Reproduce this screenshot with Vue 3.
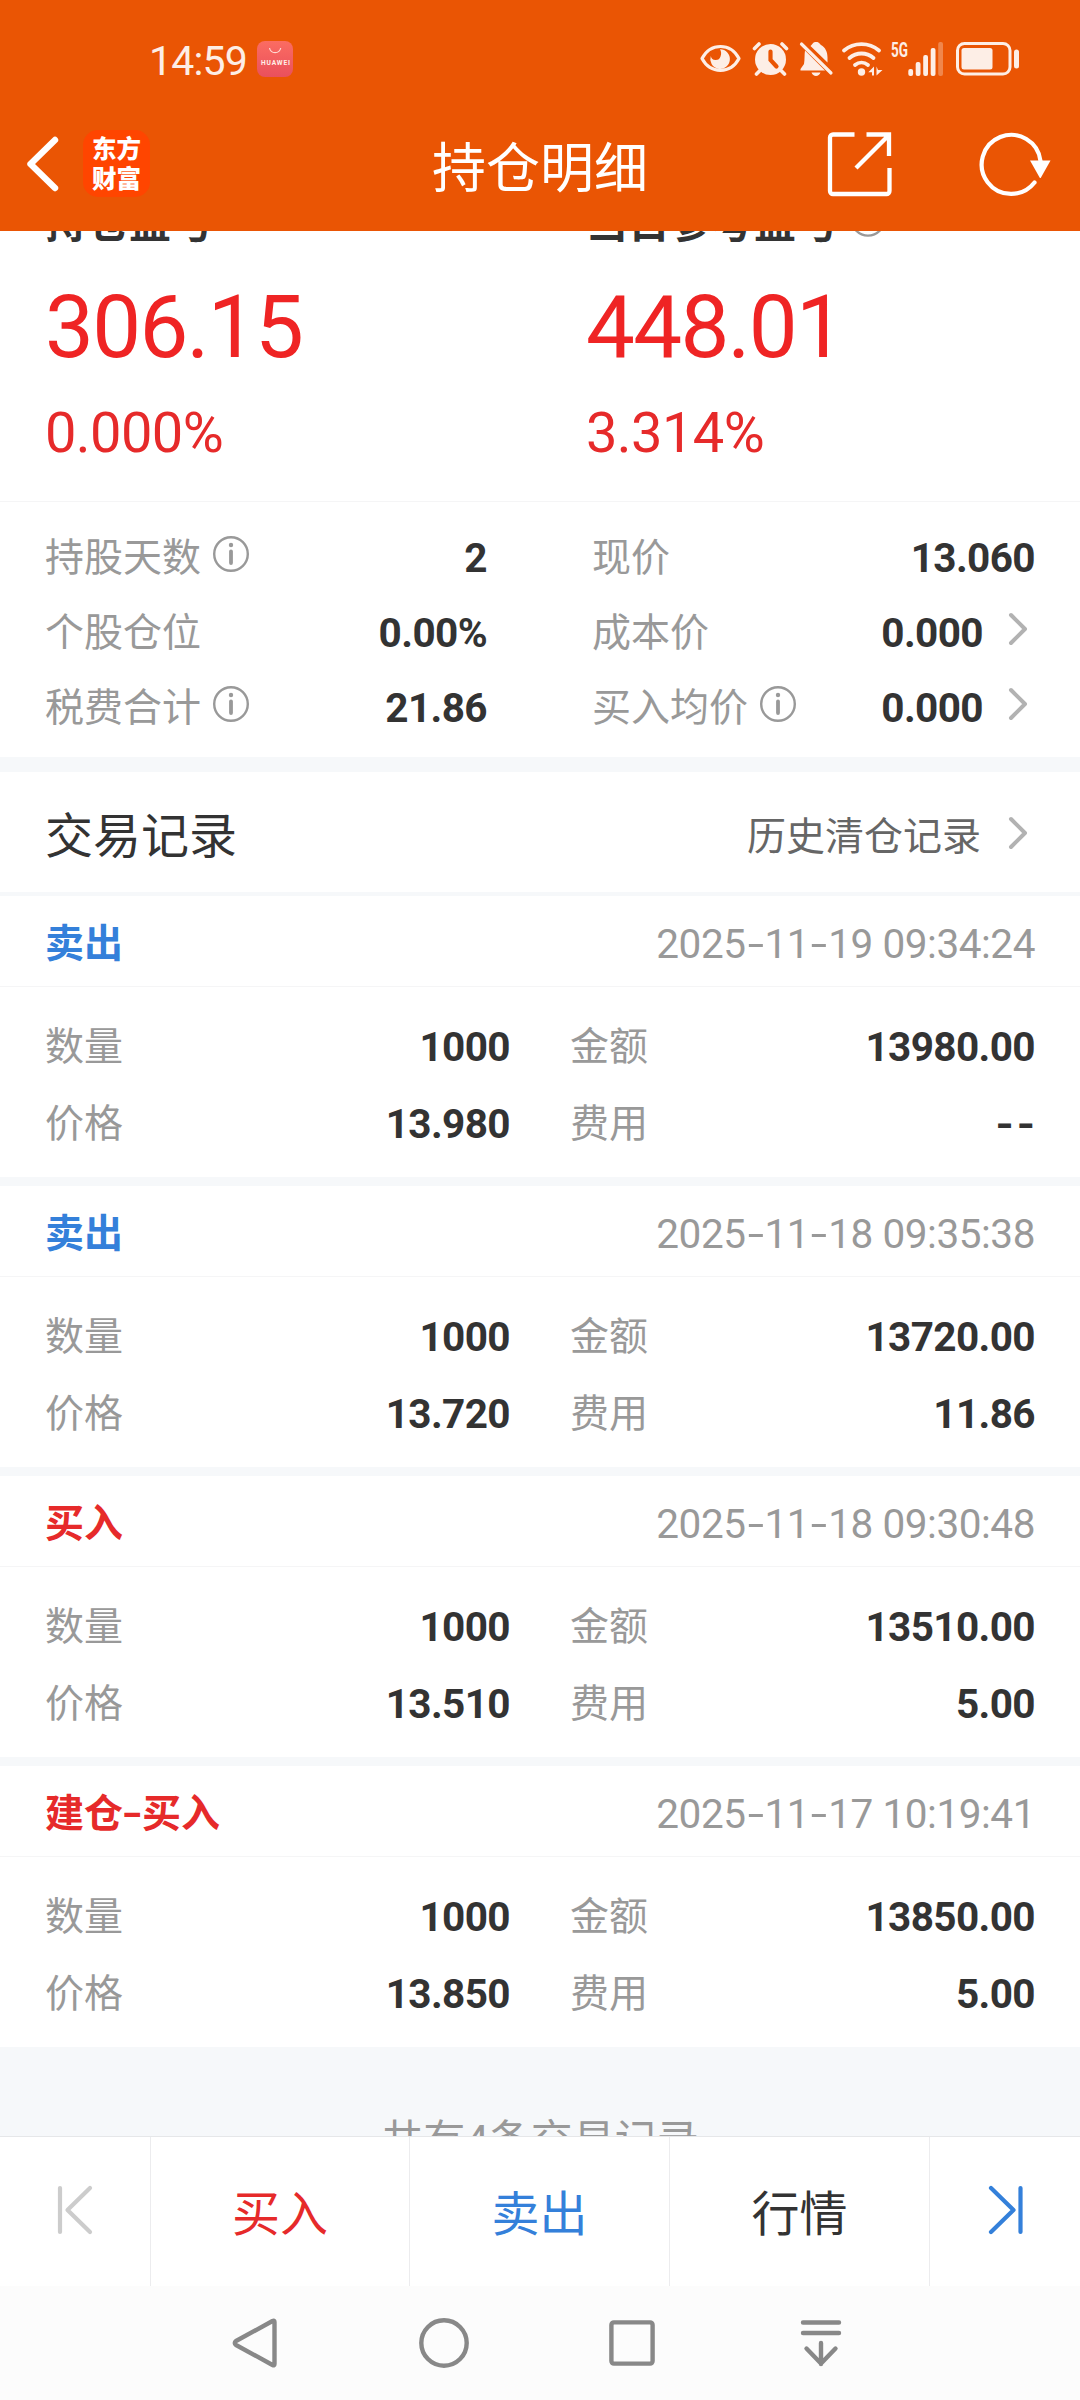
<script setup>
const leftStats = [
  { label: '持股天数', value: '2', info: true },
  { label: '个股仓位', value: '0.00%' },
  { label: '税费合计', value: '21.86', info: true },
]
const rightStats = [
  { label: '现价', value: '13.060' },
  { label: '成本价', value: '0.000', link: true },
  { label: '买入均价', value: '0.000', info: true, link: true },
]
const records = [
  { type: ['卖出'], side: 'sell', date: ['2025', '11', '19 09:34:24'], qty: '1000', amount: '13980.00', price: '13.980', fee: '--' },
  { type: ['卖出'], side: 'sell', date: ['2025', '11', '18 09:35:38'], qty: '1000', amount: '13720.00', price: '13.720', fee: '11.86' },
  { type: ['买入'], side: 'buy', date: ['2025', '11', '18 09:30:48'], qty: '1000', amount: '13510.00', price: '13.510', fee: '5.00' },
  { type: ['建仓', '买入'], side: 'buy', date: ['2025', '11', '17 10:19:41'], qty: '1000', amount: '13850.00', price: '13.850', fee: '5.00' },
]
</script>

<template>
  <div class="screen">
    <header class="header">
      <div class="status">
        <span class="time">14:59</span>
        <svg class="store" width="36" height="36" viewBox="0 0 36 36">
          <defs>
            <linearGradient id="store" x1="0" y1="0" x2="0" y2="1">
              <stop offset="0" stop-color="#fb6c62" />
              <stop offset="1" stop-color="#e9505c" />
            </linearGradient>
          </defs>
          <rect width="36" height="36" rx="8" fill="url(#store)" />
          <path d="M12.5 7a5.7 5.7 0 0 0 11.2 0" fill="none" stroke="#ffd9d2" stroke-width="1.2" />
          <text x="4" y="23.600" textLength="29" font-size="6.600" font-weight="700" fill="#fff0ea">HUAWEI</text>
        </svg>
        <div class="status-icons">
          <svg width="41" height="34" viewBox="0 0 41 34">
            <path d="M2 16.500C6 9 13 4.500 20.500 4.500S35 9 39 16.500C35 24 28 28.300 20.500 28.300S6 24 2 16.500Z" fill="none" stroke="#fdeee6" stroke-width="3.200" stroke-linejoin="round" />
            <path d="M20 7.300A9.800 9.800 0 1 1 10.800 14A5 5 0 0 0 20.500 14.500C21.500 12 21.300 9.500 20 7.300Z" fill="#fdeee6" />
          </svg>
          <svg class="g12" width="35" height="34" viewBox="0 0 35 34">
            <circle cx="17.500" cy="17.500" r="15.500" fill="#fdeee6" />
            <path d="M1.500 6.500L6 2M33.500 6.500L29 2M3.500 32L7 28.500M31.500 32L28 28.500" stroke="#fdeee6" stroke-width="3.600" stroke-linecap="round" />
            <path d="M17.500 9.500V18l6 6.500" fill="none" stroke="#ea5504" stroke-width="4.200" stroke-linecap="round" />
          </svg>
          <svg class="g12" width="32" height="34" viewBox="0 0 32 34">
            <path d="M11 3.500C12.500 2.500 12.500 0 16 0s3.500 2 5 3c4.500 2.500 6.500 7 6.500 12.500v5L10.500 4ZM5 8.500L25 28.500H0.500v-1.500L4 22c.8-4 .3-9.500 1-13.500ZM11.500 30.500h9c-.8 2.300-2.500 3.500-4.500 3.500s-3.700-1.200-4.500-3.500Z" fill="#fdeee6" />
            <path d="M5 2L33 29.500" stroke="#ea5504" stroke-width="2.600" />
            <path d="M1.500 2L31 31" stroke="#fdeee6" stroke-width="3.200" stroke-linecap="round" />
          </svg>
          <svg class="g10" width="39" height="34" viewBox="0 0 39 34">
            <path d="M2 8.500c10-8.600 25-8.600 35 0M7.500 16c7-6 17-6 24 0M13 23c4-3.300 9-3.300 13 0" fill="none" stroke="#fdeee6" stroke-width="3.800" stroke-linecap="round" />
            <circle cx="19.500" cy="30" r="3.700" fill="#fdeee6" />
            <path d="M26.300 30.300L32 24.500V33.500H30V30.300ZM34.500 33.500V24.500L36 28H40.500Z" fill="#fdeee6" />
          </svg>
          <svg class="g10" width="52" height="34" viewBox="0 0 52 34">
            <text x="0" y="14.500" textLength="17" lengthAdjust="spacingAndGlyphs" font-size="20" font-weight="700" fill="#fdeee6">5G</text>
            <g fill="#fdeee6">
              <rect x="17.300" y="27" width="4.800" height="7" rx="2" />
              <rect x="24.700" y="20" width="4.800" height="14" rx="2" />
              <rect x="32.200" y="13" width="4.800" height="21" rx="2" />
              <rect x="39.700" y="6" width="4.800" height="28" rx="2" />
              <rect x="47.200" y="0" width="4.800" height="34" rx="2" opacity=".32" />
            </g>
          </svg>
          <svg class="g13" width="63" height="34" viewBox="0 0 63 34">
            <rect x="1.500" y="1.500" width="52.500" height="30.500" rx="7" fill="none" stroke="#fdeee6" stroke-width="3" />
            <rect x="5.500" y="6" width="31" height="21.500" rx="2.500" fill="#fdeee6" />
            <rect x="58" y="7.500" width="5" height="19" rx="2.500" fill="#fdeee6" />
          </svg>
        </div>
      </div>
      <div class="nav">
        <div class="nav-left">
          <svg width="34" height="56" viewBox="0 0 34 56">
            <path d="M30 4L5.500 28l24.500 24" fill="none" stroke="#fff" stroke-width="6.400" stroke-linecap="round" stroke-linejoin="round" />
          </svg>
          <div class="logo"><span>东方</span><span>财富</span></div>
        </div>
        <h1>持仓明细</h1>
        <div class="nav-right">
          <svg width="64" height="64" viewBox="0 0 64 64">
            <path d="M26.500 2.500H5a3 3 0 0 0-3 3V59a3 3 0 0 0 3 3H58.500a3 3 0 0 0 3-3V36M38.500 2.500H61V24M28 36L60 4" fill="none" stroke="#fff" stroke-width="4.300" />
          </svg>
          <svg width="72" height="64" viewBox="0 0 72 64">
            <path d="M61.500 29A29.500 29.500 0 1 0 55.500 50.500" fill="none" stroke="#fff" stroke-width="4.200" stroke-linecap="round" />
            <path d="M51 28.500H71.500L62 45.500Q61.300 46.500 60.600 45.500Z" fill="#fff" />
          </svg>
        </div>
      </div>
    </header>

    <main class="content">
      <section class="summary">
        <div class="metric">
          <h2>持仓盈亏</h2>
          <strong>306.15</strong>
          <em>0.000%</em>
        </div>
        <div class="metric">
          <h2>当日参考盈亏
            <svg class="info" width="36" height="36" viewBox="0 0 36 36">
              <circle cx="18" cy="18" r="16.600" fill="none" stroke="#999" stroke-width="2.400" />
              <circle cx="18" cy="9" r="2.200" fill="#999" />
              <path d="M18 15.500V27" stroke="#999" stroke-width="3.600" stroke-linecap="round" />
            </svg>
          </h2>
          <strong>448.01</strong>
          <em>3.314%</em>
        </div>
      </section>

      <section class="stats">
        <div v-for="(list, i) in [leftStats, rightStats]" :key="i">
          <div v-for="s in list" :key="s.label" class="stat">
            <span class="label">{{ s.label }}</span>
            <svg v-if="s.info" class="info" width="36" height="36" viewBox="0 0 36 36">
              <circle cx="18" cy="18" r="16.800" fill="none" stroke="#999" stroke-width="2.400" />
              <circle cx="18" cy="9" r="2.200" fill="#999" />
              <path d="M18 15.500V27" stroke="#999" stroke-width="3.800" stroke-linecap="round" />
            </svg>
            <b>{{ s.value }}</b>
            <svg v-if="s.link" class="chevron" width="18" height="34" viewBox="0 0 18 34">
              <path d="M2 3L16 17L2 31" fill="none" stroke="#b2b2b2" stroke-width="4" stroke-linecap="round" stroke-linejoin="round" />
            </svg>
          </div>
        </div>
      </section>

      <section class="section-head">
        <h3>交易记录</h3>
        <span class="history">历史清仓记录</span>
        <svg class="chevron" width="18" height="34" viewBox="0 0 18 34">
          <path d="M2 3L16 17L2 31" fill="none" stroke="#b2b2b2" stroke-width="4" stroke-linecap="round" stroke-linejoin="round" />
        </svg>
      </section>

      <article v-for="r in records" :key="r.date[2]" class="record">
        <div class="record-head">
          <b :class="r.side"><template v-for="(part, i) in r.type" :key="i"><span v-if="i" class="hyphen">-</span>{{ part }}</template></b>
          <time><template v-for="(part, i) in r.date" :key="i"><span v-if="i" class="hyphen">-</span>{{ part }}</template></time>
        </div>
        <div class="record-body">
          <div><span class="label">数量</span><b>{{ r.qty }}</b></div>
          <div><span class="label">金额</span><b>{{ r.amount }}</b></div>
          <div><span class="label">价格</span><b>{{ r.price }}</b></div>
          <div><span class="label">费用</span><b :class="{ empty: r.fee === '--' }">{{ r.fee }}</b></div>
        </div>
      </article>

      <p class="total">共有4条交易记录</p>
    </main>

    <footer class="toolbar">
      <span class="cell">
        <svg width="36" height="50" viewBox="0 0 36 50">
          <path d="M3 3V47M33 3L10.500 25L33 47" fill="none" stroke="#ccc" stroke-width="4.200" stroke-linecap="round" stroke-linejoin="round" />
        </svg>
      </span>
      <span class="cell buy">买入</span>
      <span class="cell sell">卖出</span>
      <span class="cell">行情</span>
      <span class="cell">
        <svg width="36" height="50" viewBox="0 0 36 50">
          <path d="M33.500 3V47M4 3L26.500 25L4 47" fill="none" stroke="#3480da" stroke-width="4.200" stroke-linecap="round" stroke-linejoin="round" />
        </svg>
      </span>
    </footer>

    <div class="system-nav">
      <svg width="52" height="52" viewBox="0 0 52 52">
        <path d="M43.500 4Q45.500 3 45.500 5V47Q45.500 49 43.500 48L7 28Q4.500 26 7 24Z" fill="none" stroke="#888" stroke-width="4.400" stroke-linejoin="round" />
      </svg>
      <svg width="52" height="52" viewBox="0 0 52 52">
        <circle cx="26" cy="26" r="22.700" fill="none" stroke="#888" stroke-width="4.400" />
      </svg>
      <svg width="52" height="52" viewBox="0 0 52 52">
        <rect x="5.400" y="5.400" width="41.200" height="41.200" rx="2.500" fill="none" stroke="#888" stroke-width="4.400" />
      </svg>
      <svg width="52" height="52" viewBox="0 0 52 52">
        <path d="M8 5.500H44M8 16H44M26 26V47M11.500 31.500L26 46.500L40.500 31.500" fill="none" stroke="#888" stroke-width="4.400" stroke-linecap="round" stroke-linejoin="round" />
      </svg>
    </div>
  </div>
</template>

<style>
body {
  margin: 0;
  background: #fff;
}
</style>

<style scoped>
.screen {
  display: flex;
  flex-direction: column;
  width: 1080px;
  height: 2400px;
  overflow: hidden;
  background: #fff;
  color: #333;
  font-family: Roboto, "Noto Sans CJK SC", sans-serif;
  line-height: 60px;
}
svg {
  display: block;
  flex: none;
  overflow: visible;
}
h1, h2, h3, p {
  margin: 0;
  font-weight: 400;
}
em {
  font-style: normal;
}
.header {
  flex: none;
  height: 231px;
  background: #ea5504;
  color: #fff;
}
.status {
  display: flex;
  align-items: center;
  height: 117px;
  padding: 0 61px 0 149px;
}
.time {
  width: 108px;
  margin-top: 5px;
  font-size: 41px;
  letter-spacing: -0.8px;
  color: #fdeee6;
}
.status-icons {
  display: flex;
  margin-left: auto;
}
.g10 { margin-left: 10px; }
.g12 { margin-left: 12px; }
.g13 { margin-left: 13px; }
.nav {
  display: grid;
  grid-template-columns: 1fr 216px 1fr;
  align-items: center;
  height: 93px;
}
.nav-left {
  display: flex;
  align-items: center;
  padding-left: 25px;
  gap: 24px;
}
.logo {
  display: flex;
  flex-direction: column;
  justify-content: center;
  align-items: center;
  box-sizing: border-box;
  width: 67px;
  height: 67px;
  padding-top: 2px;
  border-radius: 15px;
  background: #ff4500;
  font-size: 24.5px;
  line-height: 30px;
  font-weight: 900;
}
h1 {
  padding-top: 12px;
  font-size: 54px;
  line-height: 70px;
  white-space: nowrap;
}
.nav-right {
  display: flex;
  justify-content: flex-end;
  gap: 87px;
  padding-right: 29px;
}
.content {
  flex: none;
  height: 1905px;
  overflow: hidden;
  background: #f6f8fa;
}
.summary {
  display: grid;
  grid-template-columns: 541px 1fr;
  box-sizing: border-box;
  height: 308px;
  margin-top: -37px;
  padding-left: 45px;
  background: #fff;
  border-bottom: 1px solid #f5f5f6;
}
.metric {
  display: flex;
  flex-direction: column;
}
.metric h2 {
  display: flex;
  align-items: center;
  gap: 12px;
  height: 60px;
  font-size: 42px;
  font-weight: 700;
}
.metric h2 .info {
  margin: -11px 0 0;
}
.metric strong {
  margin-top: 28px;
  font-size: 87px;
  line-height: 90px;
  font-weight: 400;
  letter-spacing: -1.7px;
  color: #ef2424;
}
.metric em {
  margin-top: 31px;
  font-size: 56px;
  letter-spacing: -0.6px;
  color: #e62a2a;
}
.stats {
  display: grid;
  grid-template-columns: 442px 443px;
  column-gap: 105px;
  padding: 18px 45px 12px;
  background: #fff;
}
.stat {
  display: flex;
  align-items: center;
  height: 75px;
}
.label {
  font-size: 39px;
  color: #999;
}
.info {
  margin: -7px 0 0 12px;
}
.stat b,
.record-body b {
  margin-left: auto;
  font-size: 40.5px;
  font-weight: 700;
  letter-spacing: -0.6px;
}
.chevron {
  margin: -7px 8px 0 26px;
}
.section-head {
  display: flex;
  align-items: center;
  box-sizing: border-box;
  height: 120px;
  margin-top: 15px;
  padding: 9px 45px 0;
  background: #fff;
}
.section-head h3 {
  margin-right: auto;
  font-size: 48px;
}
.history {
  font-size: 39px;
  color: #666;
}
.section-head .chevron {
  margin-left: 28px;
}
.record {
  height: 281px;
  margin-top: 9px;
  background: #fff;
}
.section-head + .record {
  margin-top: 4px;
}
.record-head {
  display: flex;
  align-items: center;
  justify-content: space-between;
  box-sizing: border-box;
  height: 91px;
  padding: 5px 45px 0 45px;
  border-bottom: 1px solid #f5f5f6;
  font-size: 39px;
}
.buy { color: #e62a2a; }
.sell { color: #3480da; }
time {
  font-size: 40.5px;
  letter-spacing: -0.45px;
  color: #999;
}
.hyphen {
  display: inline-block;
  width: 19px;
  text-align: center;
  transform: scaleX(1.45);
}
.record-body {
  display: grid;
  grid-template-columns: 465px 465px;
  column-gap: 60px;
  padding: 21px 45px 0;
}
.record-body div {
  display: flex;
  align-items: center;
  height: 77px;
}
.record-body .empty {
  margin-right: -3px;
  letter-spacing: 2.5px;
  transform: scaleX(1.15);
  transform-origin: right;
}
.total {
  margin-top: 63px;
  font-size: 42px;
  line-height: 62px;
  text-align: center;
  color: #999;
}
.toolbar {
  flex: none;
  display: grid;
  grid-template-columns: 151px 259px 260px 260px 150px;
  box-sizing: border-box;
  height: 150px;
  border-top: 1px solid #e6e7e9;
  background: #fff;
}
.cell {
  display: flex;
  align-items: center;
  justify-content: center;
  padding-top: 7px;
  border-right: 1px solid #ececee;
  font-size: 48px;
}
.cell:last-child {
  border-right: 0;
}
.cell svg {
  margin-top: -10px;
}
.system-nav {
  flex: none;
  display: grid;
  grid-template-columns: repeat(4, 188.5px);
  align-items: center;
  justify-items: center;
  height: 114px;
  padding-left: 161px;
  background: #fcfcfc;
}
</style>
